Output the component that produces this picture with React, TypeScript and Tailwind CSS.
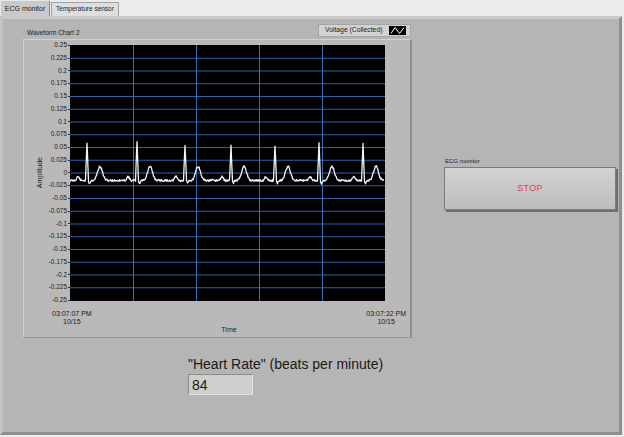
import React from "react";

const PLOT_W = 315;
const PLOT_H = 256;
const STEP = 12.75;

// R peak x positions (page coords) and their heights above baseline
const beats = [
  { x: 87, h: 38 },
  { x: 137, h: 39 },
  { x: 185, h: 36 },
  { x: 231, h: 35 },
  { x: 275, h: 35 },
  { x: 319, h: 38 },
  { x: 363, h: 36 },
];

function ecgPoints(): string {
  const pts: string[] = [];
  let seed = 11;
  const rand = () => {
    seed = (seed * 9301 + 49297) % 233280;
    return seed / 233280;
  };
  for (let x = 70; x <= 384; x += 0.5) {
    let y = 179.5;
    for (const b of beats) {
      const d = x - b.x;
      y -= 4 * Math.exp(-((d + 9) ** 2) / 3); // P wave
      y -= 14 * Math.exp(-((d - 13) ** 2) / 12); // T wave
      if (Math.abs(d) <= 1.5) y -= b.h * (1 - Math.abs(d) / 1.5); // R spike
      y += 3 * Math.exp(-((d - 2.5) ** 2) / 0.8); // S dip
    }
    y += (rand() - 0.5) * 2;
    pts.push(`${(x - 70).toFixed(1)},${(y - 44).toFixed(1)}`);
  }
  return pts.join(" ");
}

const yLabels = Array.from({ length: 21 }, (_, i) => {
  const v = Number((0.25 - i * 0.025).toFixed(3));
  return v === 0 ? "0" : String(v);
});

function Plot() {
  return (
    <svg width={PLOT_W} height={PLOT_H} className="block">
      <rect width={PLOT_W} height={PLOT_H} fill="#000" />
      {Array.from({ length: 19 }, (_, i) => (
        <line
          key={`h${i}`}
          x1={0}
          x2={PLOT_W}
          y1={0.5 + (i + 1) * STEP}
          y2={0.5 + (i + 1) * STEP}
          stroke="#2c62a6"
          strokeWidth={1}
        />
      ))}
      {[1, 2, 3, 4].map((i) => (
        <line
          key={`v${i}`}
          x1={63 * i + 0.5}
          x2={63 * i + 0.5}
          y1={0}
          y2={PLOT_H}
          stroke="#3570b8"
          strokeWidth={1}
        />
      ))}
      <polyline
        points={ecgPoints()}
        fill="none"
        stroke="#f4f4f4"
        strokeWidth={1.3}
        strokeLinejoin="round"
      />
    </svg>
  );
}

function WaveformChart() {
  return (
    <div className="w-[390px] flex flex-col">
      {/* title + legend */}
      <div className="h-[15px] flex items-start justify-between">
        <span className="pl-[5px] pt-[6px] text-[6.5px] leading-none text-[#1c1c1c]">
          Waveform Chart 2
        </span>
        <div className="mr-[1px] h-[13px] w-[93px] flex items-center justify-between bg-[#d2d2d2] border border-[#a4a4a4] pl-[6px] pr-[4px]">
          <span className="text-[6.8px] leading-none text-[#1c1c1c]">Voltage (Collected)</span>
          <svg width={17} height={9} className="block">
            <rect width={17} height={9} fill="#000" />
            <polyline points="2,7.5 6,1.5 10.5,7.5 15,1.5" fill="none" stroke="#fff" strokeWidth={1} />
          </svg>
        </div>
      </div>

      {/* frame */}
      <div className="ml-[1px] w-[389px] h-[299px] flex flex-col bg-[#b9b9b9] border-l border-t border-[#d2d2d2] border-r-2 border-r-[#8e8e8e] border-b border-b-[#9a9a9a]">
        <div className="flex items-start pt-[5px]">
          <div className="w-[24px] h-[256px] flex items-center justify-end pr-[5px]">
            <span className="[writing-mode:vertical-rl] rotate-180 text-[7px] leading-none text-[#1c1c1c]">
              Amplitude
            </span>
          </div>
          <div className="w-[22px] -mt-[6px] flex flex-col">
            {yLabels.map((l) => (
              <div key={l} className="h-[12.75px] flex items-center justify-end gap-[1px]">
                <span className="text-[6.5px] leading-none text-[#1c1c1c]">{l}</span>
                <span className="w-[2px] h-[1px] bg-[#333]" />
              </div>
            ))}
          </div>
          <Plot />
        </div>
        <div className="ml-[28px] w-[354px] mt-[3px] flex justify-between">
          <div className="flex flex-col items-center text-[7px] leading-[8px] text-[#1c1c1c]">
            <span>03:07:07 PM</span>
            <span>10/15</span>
          </div>
          <div className="flex flex-col items-center text-[7px] leading-[8px] text-[#1c1c1c]">
            <span>03:07:32 PM</span>
            <span>10/15</span>
          </div>
        </div>
        <div className="ml-[28px] w-[354px] flex justify-center">
          <span className="text-[7px] leading-[8px] text-[#1c1c1c]">Time</span>
        </div>
      </div>
    </div>
  );
}

export default function App() {
  return (
    <div className="w-[624px] h-[437px] flex flex-col bg-[#ececec] font-['Liberation_Sans',Arial,sans-serif] overflow-hidden">
      {/* tabs */}
      <div className="h-[16px] flex items-end">
        <div className="h-[16px] w-[50px] flex items-center justify-center bg-[#c9c9c9] border-t border-l border-[#e8e8e8] border-r border-r-[#8a8a8a]">
          <span className="text-[7px] leading-none text-[#1c1c1c]">ECG monitor</span>
        </div>
        <div className="h-[14px] w-[68px] ml-[1px] flex items-center justify-center bg-[#dedede] border border-[#a2a2a2] border-b-0">
          <span className="text-[6.5px] leading-none text-[#1c1c1c]">Temperature sensor</span>
        </div>
      </div>

      {/* tab page */}
      <div className="flex-1 flex flex-col bg-[#b5b5b5] border-t-[3px] border-[#c9c9c9] border-l-[3px] border-l-[#c2c2c2] border-r-[3px] border-r-[#8f8f8f] border-b-[3px] border-b-[#8f8f8f] mb-[2px] mr-[2px]">
        <div className="flex pl-[19px] pt-[5px]">
          <WaveformChart />
          <div className="ml-[32px] mt-[133px] flex flex-col">
            <span className="text-[6px] leading-[8px] text-[#1c1c1c] pl-[1px]">ECG monitor</span>
            <button className="mt-[2px] w-[172px] h-[43px] flex items-center justify-center bg-gradient-to-b from-[#d2d2d2] to-[#bdbdbd] border border-[#7c7c7c] shadow-[2px_2px_0_#6e6e6e]">
              <span className="text-[9px] leading-none text-[#e0424c] tracking-[0.3px]">STOP</span>
            </button>
          </div>
        </div>

        {/* heart rate */}
        <div className="ml-[185px] mt-[18px] flex flex-col">
          <span className="text-[14px] leading-[16px] text-[#1a1a1a]">"Heart Rate" (beats per minute)</span>
          <div className="mt-[2px] w-[65px] h-[21px] flex items-center pl-[3px] bg-[#cecece] border border-[#8c8c8c] border-b-[#e2e2e2] border-r-[#e2e2e2]">
            <span className="text-[14px] leading-none text-[#1a1a1a]">84</span>
          </div>
        </div>
      </div>
    </div>
  );
}
